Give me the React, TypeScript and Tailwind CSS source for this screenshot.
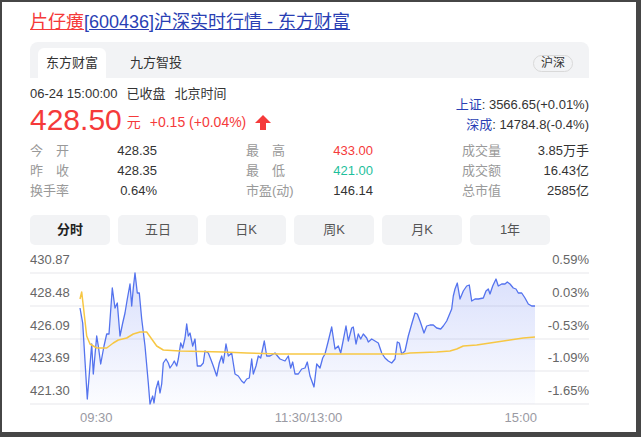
import React from "react";

const FONT = { fontFamily: '"Liberation Sans", Arial, "Noto Sans CJK SC", sans-serif' };

const PRICE: number[][] = [
  [80, 307], [82.7, 322], [87.3, 398], [91.7, 343], [93.3, 373], [96.7, 335], [98.3, 345], [100.7, 363],
  [104, 345], [106.7, 333], [109, 333], [112.3, 287], [115, 307], [117.3, 302], [120, 335], [122.7, 322],
  [125, 312], [127.3, 298], [130, 283], [131.7, 305], [133.3, 287], [135, 272], [137.3, 292], [139.3, 292],
  [141.7, 318], [145, 345], [148.3, 382], [150, 403], [152.7, 395], [154, 402], [156, 388], [158.3, 380],
  [160, 392], [161.7, 383], [163.3, 362], [166, 358], [168.3, 362], [170, 367], [172.7, 363], [174.3, 360],
  [176.7, 365], [178.3, 358], [180.7, 342], [182.7, 347], [185, 337], [186.7, 323], [188.3, 335], [190, 332],
  [192.7, 345], [195, 338], [197.3, 365], [200.7, 365], [203.3, 362], [205, 350], [208.3, 352], [210.7, 358],
  [213.3, 365], [216.7, 375], [219.3, 362], [221.7, 355], [223.3, 362], [226, 343], [228.3, 355], [231.7, 352],
  [235, 373], [238.3, 375], [241.7, 380], [244, 382], [246.7, 378], [249.3, 377], [251.7, 358], [253.3, 373],
  [256, 365], [258.3, 355], [260.7, 357], [264.3, 340], [266.7, 355], [270, 355], [275, 352], [280, 358],
  [285, 360], [288.3, 355], [290.7, 367], [292.7, 361], [295, 373], [298.3, 373], [301.7, 368], [305, 367],
  [307.3, 361], [310, 375], [314, 386], [316.7, 363], [320, 367], [322.7, 357], [325, 353], [328.3, 340],
  [331.7, 326], [335, 348], [338.3, 345], [340.7, 352], [342.7, 342], [346, 325], [348.3, 340], [351.7, 327],
  [353.3, 326], [356, 343], [358.3, 333], [360.7, 338], [363.3, 333], [366.7, 337], [368.3, 341], [371.7, 338],
  [375, 340], [378.3, 342], [381.7, 352], [385, 357], [388.3, 360], [391.7, 362], [395, 358], [397.3, 341],
  [399.3, 342], [401.7, 353], [405, 350], [408.3, 335], [411.7, 323], [415, 312], [417.3, 313], [420, 320],
  [421.7, 325], [424, 332], [426.7, 325], [430, 324], [433.3, 324], [436.7, 327], [440.7, 328], [443.3, 325],
  [446.7, 320], [451.7, 308], [453.3, 295], [455, 288], [457.3, 282], [460, 298], [463.3, 290], [466.7, 285],
  [469.3, 284], [471.7, 300], [475, 298], [478.3, 298], [483.3, 297], [486, 290], [488.3, 288], [490, 293],
  [492.7, 285], [496, 278], [498.3, 285], [501.7, 283], [505, 283], [507.3, 281], [510, 283], [513.3, 287],
  [516, 288], [518.3, 292], [521.7, 292], [525, 297], [528.3, 303], [531.7, 305], [535, 305],
];

const AVG: number[][] = [
  [80, 298], [81.7, 291], [83.3, 305], [86.7, 335], [90, 343], [96.7, 347], [106.7, 347], [113.3, 342],
  [118.3, 339], [126.7, 337], [133.3, 333], [140, 331], [146.7, 331], [151.7, 338], [156.7, 345], [163.3, 349],
  [180, 350], [223.3, 351], [246.7, 352], [280, 353], [403.3, 353], [410, 352], [436.7, 351], [450, 350],
  [456.7, 348], [463.3, 345], [476.7, 344], [490, 342], [496.7, 341], [510, 339], [523.3, 337], [535, 336],
];

const toPts = (pts: number[][]) => pts.map(([x, y]) => `${x},${y}`).join(" ");

const stats = [
  [["今开", "428.35", ""], ["最高", "433.00", "text-[#f53a3a]"], ["成交量", "3.85万手", ""]],
  [["昨收", "428.35", ""], ["最低", "421.00", "text-[#1fbf9c]"], ["成交额", "16.43亿", ""]],
  [["换手率", "0.64%", ""], ["市盈(动)", "146.14", ""], ["总市值", "2585亿", ""]],
];

const periods = ["分时", "五日", "日K", "周K", "月K", "1年"];

const axis = [
  ["430.87", "0.59%"],
  ["428.48", "0.03%"],
  ["426.09", "-0.53%"],
  ["423.69", "-1.09%"],
  ["421.30", "-1.65%"],
];

function Label({ text }: { text: string }) {
  if (text.length === 2) {
    return (
      <span className="flex w-[39px] justify-between text-[#999]">
        <span>{text[0]}</span>
        <span>{text[1]}</span>
      </span>
    );
  }
  return <span className="text-[#999]">{text}</span>;
}

export default function App() {
  return (
    <div className="h-[437px] w-[641px] bg-[#464646] pl-[2px] pt-[2px]" style={FONT}>
      <div className="h-[430px] w-[634px] bg-white pl-[28px] pt-[8px]">
        <div className="w-[559px]">
          {/* title */}
          <div className="h-[24px] text-[18px] leading-[24px]">
            <a className="text-[#f53a3a] underline">片仔癀</a>
            <a className="text-[#2a3fb4] underline">[600436]沪深实时行情 - 东方财富</a>
          </div>

          {/* source tabs */}
          <div className="mt-[8px] flex h-[36px] rounded-t-[8px] bg-[#f2f3f5] pl-2 pr-[16px] pt-[6px]">
            <div className="flex gap-4">
              <div className="flex h-[30px] items-center rounded-t-[6px] bg-white px-2 text-[13px] text-[#333]">东方财富</div>
              <div className="flex h-[30px] items-center px-2 text-[13px] text-[#333]">九方智投</div>
            </div>
            <span className="ml-auto flex h-[17px] items-center self-center rounded-full border border-[#d9d9d9] px-[7px] text-[12px] text-[#333]">
              沪深
            </span>
          </div>

          {/* quote header */}
          <div className="mt-[8px] flex items-end justify-between">
            <div>
              <div className="flex h-[16px] gap-[9px] text-[13px] leading-[16px] text-[#333]">
                <span>06-24 15:00:00</span>
                <span>已收盘</span>
                <span>北京时间</span>
              </div>
              <div className="mt-[2px] flex h-[32px] items-center text-[#f53a3a]">
                <span className="text-[30px] leading-[32px]">428.50</span>
                <span className="ml-[5px] mt-[4px] text-[14px]">元</span>
                <span className="ml-[9px] mt-[4px] text-[14px]">+0.15 (+0.04%)</span>
                <svg className="ml-[9px] mt-[4px]" width="16" height="15" viewBox="0 0 16 15">
                  <polygon points="8,0 16,8 11,8 11,15 5,15 5,8 0,8" fill="#f53a3a" />
                </svg>
              </div>
            </div>
            <div className="pb-[1px] text-right text-[13px] leading-[20px] text-[#333]">
              <div>
                <span className="text-[#2a3fb4]">上证</span>: 3566.65(+0.01%)
              </div>
              <div>
                <span className="text-[#2a3fb4]">深成</span>: 14784.8(-0.4%)
              </div>
            </div>
          </div>

          {/* stats */}
          <div className="mt-[5px] grid grid-cols-3 gap-x-[89px] text-[13px] leading-[20px]">
            {stats.flat().map(([label, value, color]) => (
              <div key={label} className="flex h-[20px] items-center justify-between">
                <Label text={label} />
                <span className={color || "text-[#333]"}>{value}</span>
              </div>
            ))}
          </div>

          {/* periods */}
          <div className="mt-[14px] flex gap-2">
            {periods.map((p, i) => (
              <div
                key={p}
                className={`flex h-[30px] w-[80px] items-center justify-center rounded-[5px] bg-[#f2f3f5] text-[13px] ${
                  i === 0 ? "font-bold text-[#222]" : "text-[#555]"
                }`}
              >
                {p}
              </div>
            ))}
          </div>

          {/* chart */}
          <div className="relative mt-[1px]">
            {axis.map(([l, r], i) => (
              <div
                key={l}
                className={`flex items-end justify-between border-b-2 border-[#f3f3f5] pb-[4px] text-[13px] leading-[16px] text-[#666] ${
                  i === 0 ? "h-[28px]" : "h-[32.75px]"
                }`}
              >
                <span>{l}</span>
                <span>{r}</span>
              </div>
            ))}
            <svg
              className="absolute left-0 top-0 overflow-visible"
              width="559"
              height="159"
              viewBox="30 245 559 159"
            >
              <defs>
                <linearGradient id="fill" x1="0" y1="272" x2="0" y2="403" gradientUnits="userSpaceOnUse">
                  <stop offset="0" stopColor="#5470f0" stopOpacity="0.22" />
                  <stop offset="1" stopColor="#5470f0" stopOpacity="0.02" />
                </linearGradient>
              </defs>
              <polygon points={`${toPts(PRICE)} 535,403 80,403`} fill="url(#fill)" />
              <polyline points={toPts(PRICE)} fill="none" stroke="#5473ee" strokeWidth="1.3" strokeLinejoin="round" />
              <polyline points={toPts(AVG)} fill="none" stroke="#f7c744" strokeWidth="1.5" strokeLinejoin="round" />
            </svg>
          </div>
          <div className="mt-[5px] flex h-[16px] pl-[50px] text-[13px] leading-[16px] text-[#9a9aa3]">
            <div className="flex w-[457px] justify-between">
              <span>09:30</span>
              <span>11:30/13:00</span>
              <span>15:00</span>
            </div>
          </div>
        </div>
      </div>
    </div>
  );
}
